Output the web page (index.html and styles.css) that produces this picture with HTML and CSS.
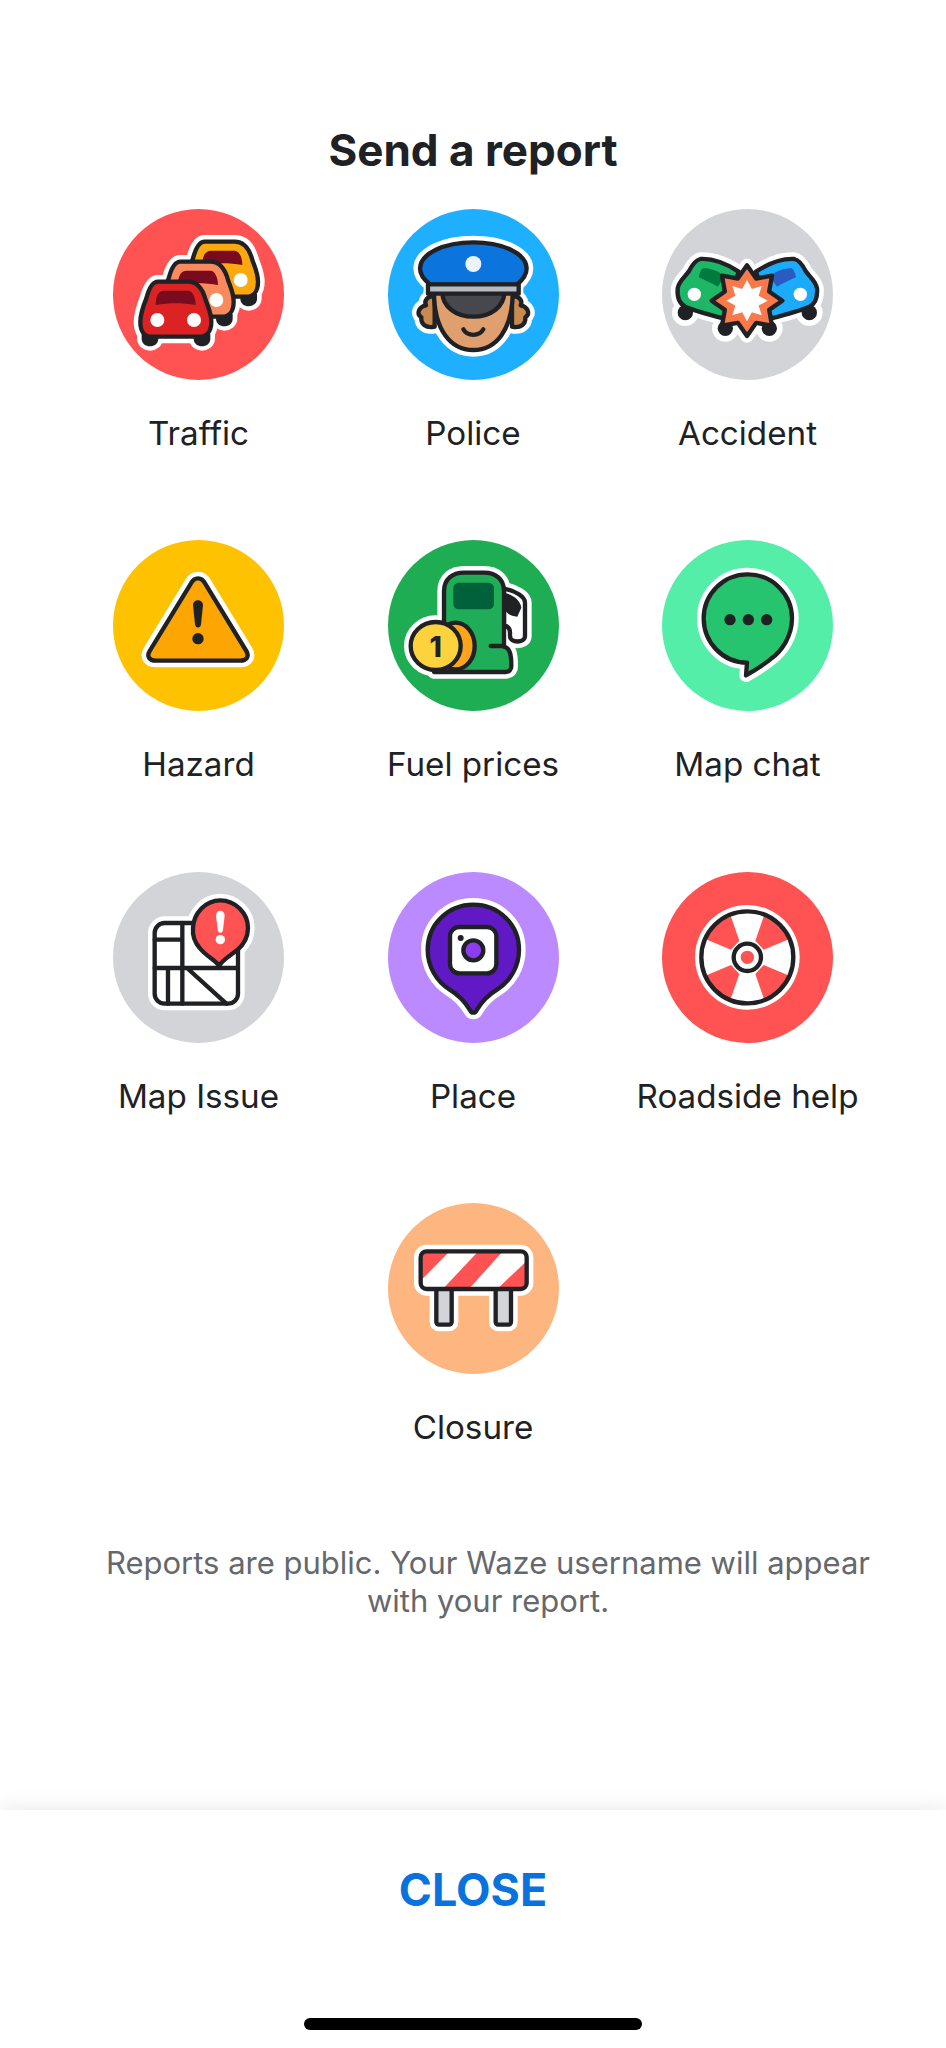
FILE: index.html
```html
<!DOCTYPE html>
<html lang="en">
<head>
<meta charset="utf-8">
<title>Send a report</title>
<link rel="stylesheet" href="styles.css">
</head>
<body>
<main class="screen">
  <h1 class="title">Send a report</h1>
  <div class="grid">

    <div class="item">
      <div class="disc red">
        <svg class="icon" viewBox="70 57 513 513">
          <defs>
            <g id="car-sil">
              <path d="M205 275H295C325 275 340 300 348 330C355 350 365 370 365 395C365 425 350 440 330 440H185C165 440 152 425 152 395C152 370 160 350 170 325C178 295 190 275 205 275Z"/>
              <path d="M162 435H200V444C200 468 162 468 162 444Z"/>
              <path d="M318 435H356V444C356 468 318 468 318 444Z"/>
            </g>
            <g id="car-det">
              <path d="M156 432H206V446C206 476 156 476 156 446Z" fill="#202124"/>
              <path d="M312 432H362V446C362 476 312 476 312 446Z" fill="#202124"/>
              <path class="ln" d="M205 275H295C325 275 340 300 348 330C355 350 365 370 365 395C365 425 350 440 330 440H185C165 440 152 425 152 395C152 370 160 350 170 325C178 295 190 275 205 275Z" fill="currentColor"/>
              <path d="M198 345C198 320 205 302 225 302H295C310 302 318 325 318 345C280 338 235 338 198 345Z" fill="#7a0a1d"/>
              <circle cx="203" cy="390" r="21" fill="#fff"/>
              <circle cx="313" cy="390" r="21" fill="#fff"/>
            </g>
          </defs>
          <use class="halo" href="#car-sil" transform="translate(140 -120)"/>
          <use class="halo" href="#car-sil" transform="translate(67 -60)"/>
          <use class="halo" href="#car-sil"/>
          <use class="car-c" href="#car-det" transform="translate(140 -120)"/>
          <use class="car-b" href="#car-det" transform="translate(67 -60)"/>
          <use class="car-a" href="#car-det"/>
        </svg>
      </div>
      <span class="label">Traffic</span>
    </div>

    <div class="item">
      <div class="disc sky">
        <svg class="icon" viewBox="892 57 513 513">
          <defs>
            <path id="pol-hair" d="M1032 318C1008 318 1000 334 1006 346C986 350 975 370 992 382C990 402 1006 416 1032 410Z"/>
            <g id="pol-sil">
              <path d="M1020 285C1000 270 988 255 988 235C990 190 1060 157 1148 157C1236 157 1306 190 1308 235C1308 255 1296 270 1278 285V310H1266C1266 420 1216 480 1148 480C1080 480 1030 420 1030 310H1018Z"/>
              <use href="#pol-hair"/>
              <use href="#pol-hair" transform="matrix(-1 0 0 1 2296 0)"/>
            </g>
          </defs>
          <use class="halo" href="#pol-sil"/>
          <use href="#pol-hair" class="ln" fill="#c98a52"/>
          <use href="#pol-hair" class="ln" fill="#c98a52" transform="matrix(-1 0 0 1 2296 0)"/>
          <path class="ln" fill="#df9f6f" d="M1030 305C1030 420 1080 480 1148 480C1216 480 1266 420 1266 305Z"/>
          <path class="ln" fill="#47484d" d="M1055 308H1241C1240 350 1200 380 1148 380C1096 380 1056 350 1055 308Z"/>
          <path class="ln" fill="#0b74dd" d="M1020 285C1000 270 988 255 988 235C990 190 1060 157 1148 157C1236 157 1306 190 1308 235C1308 255 1296 270 1278 285Z"/>
          <rect class="ln" fill="#b9bbc2" x="1012" y="283" width="272" height="28"/>
          <circle cx="1148" cy="222" r="24" fill="#fff" opacity=".92"/>
          <path class="ln" fill="none" d="M1118 418C1130 440 1166 440 1178 418"/>
        </svg>
      </div>
      <span class="label">Police</span>
    </div>

    <div class="item">
      <div class="disc gray">
        <svg class="icon" viewBox="545 57 513 513">
          <defs>
            <g id="acc-sil">
              <path d="M660 207C700 205 740 222 775 245L730 385C690 375 650 365 615 350C595 340 590 320 592 295C595 275 610 265 625 245C635 225 645 210 660 207Z"/>
              <circle cx="615" cy="368" r="20"/>
              <circle cx="735" cy="415" r="20"/>
            </g>
            <polygon id="acc-star" points="800,226 827.6,265.5 875,257 866.5,304.4 906,332 866.5,359.6 875,407 827.6,398.5 800,438 772.4,398.5 725,407 733.5,359.6 694,332 733.5,304.4 725,257 772.4,265.5"/>
          </defs>
          <use class="halo" href="#acc-sil"/>
          <use class="halo" href="#acc-sil" transform="matrix(-1 0 0 1 1602 0)"/>
          <use class="halo" href="#acc-star"/>
          <circle cx="615" cy="368" r="23" fill="#202124"/>
          <circle cx="735" cy="415" r="23" fill="#202124"/>
          <circle cx="987" cy="368" r="23" fill="#202124"/>
          <circle cx="867" cy="415" r="23" fill="#202124"/>
          <path class="ln" fill="#1db767" d="M660 207C700 205 740 222 775 245L730 385C690 375 650 365 615 350C595 340 590 320 592 295C595 275 610 265 625 245C635 225 645 210 660 207Z"/>
          <path fill="#007a3d" d="M668 235C690 232 715 245 735 258L712 290C695 280 672 270 655 262C658 250 660 240 668 235Z"/>
          <circle cx="642" cy="313" r="20" fill="#fff"/>
          <g transform="matrix(-1 0 0 1 1602 0)">
            <path class="ln" fill="#1cabfb" d="M660 207C700 205 740 222 775 245L730 385C690 375 650 365 615 350C595 340 590 320 592 295C595 275 610 265 625 245C635 225 645 210 660 207Z"/>
            <path fill="#2a5bc0" d="M668 235C690 232 715 245 735 258L712 290C695 280 672 270 655 262C658 250 660 240 668 235Z"/>
            <circle cx="642" cy="313" r="20" fill="#fff"/>
          </g>
          <use href="#acc-star" class="ln" fill="#f9794a"/>
          <polygon fill="#fff" points="800,270 814.5,297 844,288 835,317.5 862,332 835,346.5 844,376 814.5,367 800,394 785.5,367 756,376 765,346.5 738,332 765,317.5 756,288 785.5,297"/>
        </svg>
      </div>
      <span class="label">Accident</span>
    </div>

    <div class="item">
      <div class="disc amber">
        <svg class="icon" viewBox="70 62 513 513">
          <defs>
            <path id="haz" d="M304 192C314 172 336 172 346 192L470 395C480 412 470 424 452 424H198C180 424 170 412 180 395Z"/>
          </defs>
          <use class="halo" href="#haz"/>
          <use class="ln" href="#haz" fill="#fca503"/>
          <path fill="#202124" d="M310 258C310 238 340 238 340 258L334 315C333 328 317 328 316 315Z"/>
          <circle cx="325" cy="358" r="17" fill="#202124"/>
        </svg>
      </div>
      <span class="label">Hazard</span>
    </div>

    <div class="item">
      <div class="disc green">
        <svg class="icon" viewBox="892 62 513 513">
          <defs>
            <path id="pump" d="M1060 330V215C1060 180 1085 160 1120 160H1180C1215 160 1240 180 1240 215V382C1258 386 1262 405 1262 440C1262 452 1255 458 1245 458H1030V330Z"/>
            <path id="hose" d="M1240 208C1275 215 1303 232 1303 250V350C1303 372 1258 372 1258 350V340C1258 325 1250 320 1240 318Z"/>
            <g id="fuel-sil">
              <use href="#pump"/>
              <use href="#hose"/>
              <ellipse cx="1095" cy="380" rx="57" ry="72"/>
              <ellipse cx="1035" cy="380" rx="75" ry="72"/>
            </g>
          </defs>
          <use class="halo" href="#fuel-sil"/>
          <use class="ln" href="#hose" fill="#fff"/>
          <path fill="#202124" d="M1245 222C1265 226 1288 240 1292 265L1280 292C1264 292 1250 284 1245 275Z"/>
          <use class="ln" href="#pump" fill="#20ad58"/>
          <rect x="1088" y="190" width="122" height="80" rx="16" fill="#00613a"/>
          <path class="ln" fill="none" d="M1200 380H1240"/>
          <ellipse class="ln" cx="1095" cy="380" rx="57" ry="70" fill="#fba41c"/>
          <ellipse class="ln" cx="1035" cy="380" rx="75" ry="72" fill="#fdd33d"/>
          <text class="coin" x="1035" y="412" text-anchor="middle">1</text>
        </svg>
      </div>
      <span class="label">Fuel prices</span>
    </div>

    <div class="item">
      <div class="disc mint">
        <svg class="icon" viewBox="65 62 513 513">
          <defs>
            <path id="bubble" d="M320 430C248 430 190 370 190 297C190 224 249 165 322 165C395 165 455 224 455 297C455 350 425 395 390 420C365 440 340 455 317 468Z"/>
          </defs>
          <use class="halo" href="#bubble"/>
          <use class="ln" href="#bubble" fill="#26c46e"/>
          <circle cx="269" cy="301" r="17" fill="#202124"/>
          <circle cx="324" cy="301" r="17" fill="#202124"/>
          <circle cx="379" cy="301" r="17" fill="#202124"/>
        </svg>
      </div>
      <span class="label">Map chat</span>
    </div>

    <div class="item">
      <div class="disc gray">
        <svg class="icon" viewBox="40 37 513 513">
          <defs>
            <path id="mappin" d="M358 318C345 300 320 290 300 265C285 248 278 228 280 205C282 160 318 122 362 122C406 122 445 160 445 205C445 232 432 255 412 272C395 285 372 298 358 318Z"/>
          </defs>
          <rect class="halo" x="165" y="190" width="250" height="242" rx="30"/>
          <use class="halo" href="#mappin"/>
          <rect class="ln" x="165" y="190" width="250" height="242" rx="30" fill="#fff"/>
          <path class="ln" fill="none" d="M248 190V432M165 240H248M165 325H415M205 325V432M262 325L380 432"/>
          <use class="ln" href="#mappin" fill="#ff5252"/>
          <path fill="#fff" d="M349 168C349 148 375 148 375 168L370 210C369 222 355 222 354 210Z"/>
          <circle cx="362" cy="240" r="14" fill="#fff"/>
        </svg>
      </div>
      <span class="label">Map Issue</span>
    </div>

    <div class="item">
      <div class="disc violet">
        <svg class="icon" viewBox="863 37 513 513">
          <defs>
            <path id="placepin" d="M1119 135C1195 135 1256 195 1256 270C1256 320 1230 365 1190 390C1165 405 1145 425 1130 450C1124 462 1114 462 1108 450C1093 425 1073 405 1048 390C1008 365 982 320 982 270C982 195 1043 135 1119 135Z"/>
          </defs>
          <use class="halo" href="#placepin"/>
          <use class="ln" href="#placepin" fill="#6119c6"/>
          <rect class="ln" x="1049" y="202" width="139" height="139" rx="28" fill="#fff"/>
          <circle cx="1081" cy="235" r="9" fill="#202124"/>
          <circle class="ln" cx="1119" cy="272" r="30" fill="#8c3df0"/>
        </svg>
      </div>
      <span class="label">Place</span>
    </div>

    <div class="item">
      <div class="disc red">
        <svg class="icon" viewBox="65 37 513 513">
          <defs>
            <path id="sector" d="M345 243L372 165A140 140 0 0 1 449 237L370 270Z"/>
          </defs>
          <circle cx="321" cy="293" r="157" fill="#fff"/>
          <use href="#sector" fill="#ff5252"/>
          <use href="#sector" fill="#ff5252" transform="matrix(-1 0 0 1 642 0)"/>
          <use href="#sector" fill="#ff5252" transform="matrix(1 0 0 -1 0 586)"/>
          <use href="#sector" fill="#ff5252" transform="matrix(-1 0 0 -1 642 586)"/>
          <circle class="ln" cx="321" cy="293" r="138" fill="none"/>
          <circle class="ln" cx="321" cy="293" r="41" fill="#fff"/>
          <circle cx="321" cy="293" r="20" fill="#ff5252"/>
        </svg>
      </div>
      <span class="label">Roadside help</span>
    </div>

    <div class="item item-last">
      <div class="disc peach">
        <svg class="icon" viewBox="52 40 513 513">
          <rect class="halo" x="150" y="185" width="318" height="113" rx="18"/>
          <rect class="halo" x="197" y="290" width="46" height="115" rx="8"/>
          <rect class="halo" x="375" y="290" width="46" height="115" rx="8"/>
          <rect class="ln" x="197" y="290" width="46" height="115" rx="8" fill="#d2d4d8"/>
          <rect class="ln" x="375" y="290" width="46" height="115" rx="8" fill="#d2d4d8"/>
          <rect x="150" y="185" width="318" height="113" rx="18" fill="#fff"/>
          <path fill="#ff5252" d="M155 190H232L155 268ZM318 190H392L300 292H222ZM466 216V292H386Z"/>
          <rect class="ln" x="150" y="185" width="318" height="113" rx="18" fill="none"/>
        </svg>
      </div>
      <span class="label">Closure</span>
    </div>

  </div>
  <p class="note">Reports are public. Your Waze username will appear<br>with your report.</p>
  <footer class="bar">
    <button class="close" type="button">CLOSE</button>
    <div class="home"></div>
  </footer>
</main>
</body>
</html>
```

FILE: styles.css
```css
* { box-sizing: border-box; }

html, body {
  margin: 0;
  height: 100%;
  background: #fff;
}

body {
  font-family: Inter, "Liberation Sans", sans-serif;
  color: #202124;
  overflow: hidden;
}

.screen {
  display: flex;
  flex-direction: column;
  height: 2048px;
}

.title {
  margin: 125px 0 34px;
  font-size: 44px;
  line-height: 50px;
  font-weight: 700;
  text-align: center;
}

.grid {
  display: grid;
  grid-template-columns: repeat(3, 274.5px);
  grid-auto-rows: 331.33px;
  justify-content: center;
}

.item {
  display: flex;
  flex-direction: column;
  align-items: center;
}

.item-last { grid-column: 2; }

.disc {
  width: 171px;
  height: 171px;
  border-radius: 50%;
  flex: none;
}

.red { background: #ff5252; }
.sky { background: #1eb0ff; }
.gray { background: #d2d4d8; }
.amber { background: #ffc200; }
.green { background: #1fad54; }
.mint { background: #55eea9; }
.violet { background: #bc8aff; }
.peach { background: #fdb67f; }

.icon {
  display: block;
  width: 171px;
  height: 171px;
}

.halo {
  fill: #fff;
  stroke: #fff;
  stroke-width: 40;
  stroke-linejoin: round;
}

.ln {
  stroke: #202124;
  stroke-width: 13;
  stroke-linejoin: round;
  stroke-linecap: round;
}

.car-a { color: #dc2222; }
.car-b { color: #f98a5d; }
.car-c { color: #fba90f; }

.coin {
  font-size: 84px;
  font-weight: 800;
  fill: #202124;
}

.label {
  margin-top: 33px;
  font-size: 33.2px;
  line-height: 40px;
  white-space: nowrap;
}

.note {
  margin: 10px 0 0;
  padding-left: 30px;
  font-size: 31px;
  line-height: 37.5px;
  text-align: center;
  color: #65686c;
}

.bar {
  margin-top: auto;
  height: 238px;
  display: flex;
  flex-direction: column;
  align-items: center;
  padding: 52px 0 18px;
  background: #fff;
  box-shadow: 0 -2px 20px rgba(0, 0, 0, .09);
}

.close {
  border: 0;
  padding: 0;
  background: none;
  font-family: inherit;
  font-size: 44.8px;
  line-height: 56px;
  font-weight: 700;
  color: #0a72dc;
}

.home {
  margin-top: auto;
  width: 338px;
  height: 12px;
  border-radius: 6px;
  background: #000;
}
```
